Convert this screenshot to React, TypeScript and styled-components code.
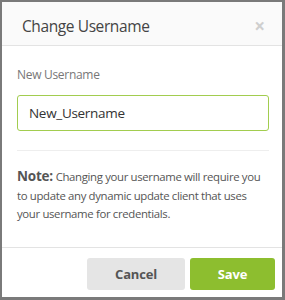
import styled, { createGlobalStyle } from 'styled-components';

const Global = createGlobalStyle`
  html, body { margin: 0; padding: 0; background: #7a7a7a; }
  body { font-family: "Open Sans", "Liberation Sans", sans-serif; }
`;

const Frame = styled.div`
  width: 285px;
  height: 300px;
  box-sizing: border-box;
  padding: 2px 3px 3px 2px;
  background: #7a7a7a;
`;

const Modal = styled.div`
  height: 100%;
  background: #fff;
  display: flex;
  flex-direction: column;
`;

const Header = styled.div`
  height: 44px;
  box-sizing: border-box;
  background: #fafafa;
  border-bottom: 1px solid #e3e3e3;
  display: flex;
  align-items: center;
  justify-content: space-between;
  padding: 5px 17px 0 20px;
`;

const Title = styled.h3`
  margin: 0;
  font-size: 15.5px;
  letter-spacing: -0.4px;
  font-weight: 400;
  color: #444;
`;

const Close = styled.span`
  font-size: 19px;
  font-weight: 700;
  color: #cfcfcf;
  line-height: 1;
`;

const Body = styled.div`
  flex: 1;
  padding: 20px 13px 0 15px;
`;

const Label = styled.label`
  display: block;
  font-size: 12px;
  letter-spacing: -0.3px;
  color: #777;
  margin-bottom: 12px;
`;

const Input = styled.input`
  width: 100%;
  height: 36px;
  box-sizing: border-box;
  border: 1px solid #a2cd4f;
  border-radius: 3px;
  padding: 0 11px;
  font-family: inherit;
  font-size: 13.5px;
  letter-spacing: -0.3px;
  color: #333;
  outline: none;
`;

const Divider = styled.hr`
  border: 0;
  border-top: 1px solid #eeeeee;
  margin: 19px 0 16px;
`;

const Note = styled.p`
  margin: 0;
  font-size: 11.4px;
  letter-spacing: -0.35px;
  line-height: 18.5px;
  color: #555;
  strong {
    font-size: 13.5px;
    letter-spacing: -0.2px;
    font-weight: 700;
    color: #555;
  }
`;

const Footer = styled.div`
  height: 50px;
  box-sizing: border-box;
  border-top: 1px solid #e3e3e3;
  display: flex;
  justify-content: flex-end;
  align-items: center;
  gap: 5px;
  padding: 2px 7px 0 0;
`;

const Button = styled.button<{ $primary?: boolean }>`
  height: 32px;
  width: ${(p) => (p.$primary ? '85px' : '98px')};
  border: 0;
  border-radius: 3px;
  font-family: inherit;
  font-size: 13px;
  letter-spacing: -0.2px;
  font-weight: 700;
  background: ${(p) => (p.$primary ? '#8dbe2f' : '#e5e5e5')};
  color: ${(p) => (p.$primary ? '#fff' : '#555')};
`;

export default function App() {
  return (
    <Frame>
      <Global />
      <Modal>
        <Header>
          <Title>Change Username</Title>
          <Close>×</Close>
        </Header>
        <Body>
          <Label>New Username</Label>
          <Input defaultValue="New_Username" />
          <Divider />
          <Note>
            <strong>Note:</strong> Changing your username will require you to update any dynamic update client that uses your username for credentials.
          </Note>
        </Body>
        <Footer>
          <Button>Cancel</Button>
          <Button $primary>Save</Button>
        </Footer>
      </Modal>
    </Frame>
  );
}
